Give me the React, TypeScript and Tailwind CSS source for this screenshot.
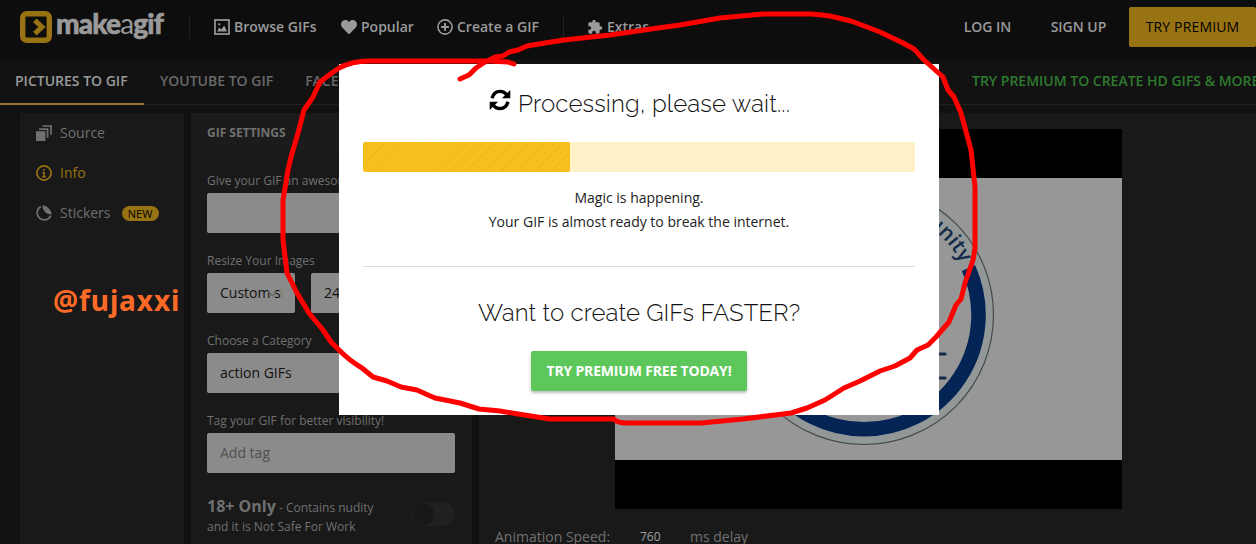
import type { ReactNode } from "react";
import { FaHeart } from "react-icons/fa";
import { MdExtension } from "react-icons/md";

function ImageIcon() {
  return (
    <svg width="16" height="16" viewBox="0 0 16 16">
      <rect x="1" y="1" width="14" height="14" fill="none" stroke="#9a9a9a" strokeWidth="1.7" />
      <path d="M3 12.5 5.3 8.5 7.2 10.4 10.2 6.5 13 12.5Z" fill="#9a9a9a" />
      <circle cx="5.2" cy="5.3" r="1.1" fill="#9a9a9a" />
    </svg>
  );
}

function PlusIcon() {
  return (
    <svg width="16" height="16" viewBox="0 0 16 16" fill="none" stroke="#9a9a9a" strokeWidth="1.6">
      <circle cx="8" cy="8" r="7.1" />
      <path d="M8 4v8M4 8h8" strokeWidth="1.9" />
    </svg>
  );
}

function SourceIcon() {
  return (
    <svg width="16" height="16" viewBox="0 0 16 16">
      <rect x="0" y="6.2" width="9.5" height="9.8" fill="#707070" />
      <path d="M3 4.2h8.6v8.6M6.4 1h8.6v8.8" fill="none" stroke="#707070" strokeWidth="1.7" />
    </svg>
  );
}

function InfoIcon() {
  return (
    <svg width="16" height="16" viewBox="0 0 16 16">
      <circle cx="8" cy="8" r="7.1" fill="none" stroke="#987313" strokeWidth="1.7" />
      <path d="M8 4v1.8M8 7v5.2M6.4 7.5H8M6.2 11.8h3.6" stroke="#987313" strokeWidth="1.5" />
    </svg>
  );
}

function StickerIcon() {
  return (
    <svg width="16" height="16" viewBox="0 0 16 16">
      <path d="M4.8 1.6A7.1 7.1 0 1 0 14.8 10.6" fill="none" stroke="#707070" strokeWidth="1.7" />
      <path d="M6.6.2C11 .8 15 4.5 15.8 9.2 11.5 10.2 6.2 6 6.6.2Z" fill="#707070" />
    </svg>
  );
}

function SyncIcon() {
  return (
    <svg width="22" height="22" viewBox="0 0 22 22">
      <path d="M3 9.2C4.2 4.9 7.1 2.4 11 2.4c2.9 0 5.2 1.2 6.8 3.5" fill="none" stroke="#000" strokeWidth="3.4" />
      <path d="M21.3 1v8.2h-8.4Z" />
      <path d="M19 12.8c-1.2 4.3-4.1 6.8-8 6.8-2.9 0-5.2-1.2-6.8-3.5" fill="none" stroke="#000" strokeWidth="3.4" />
      <path d="M.7 21v-8.2h8.4Z" />
    </svg>
  );
}

function Logo() {
  return (
    <div className="flex h-8 w-[150px] shrink-0 items-start">
      <svg className="shrink-0" width="32" height="32" viewBox="0 0 32 32">
        <rect x="2.7" y="2.7" width="26.6" height="26.6" rx="4" fill="none" stroke="#987313" strokeWidth="5.4" />
        <path d="m14.8 9.3 7.2 6.7-7.2 6.7" fill="none" stroke="#987313" strokeWidth="5" />
      </svg>
      <div className="-mt-[5px] ml-1 flex font-[Lato] text-[28px] leading-[34px] font-black tracking-[-0.85px] text-[#9a9a9a]">
        <span className="[-webkit-text-stroke:0.6px_#9a9a9a]">make</span>
        <span className="font-normal">a</span>
        <span className="[-webkit-text-stroke:0.6px_#9a9a9a]">gif</span>
      </div>
    </div>
  );
}

function NavItem({ icon, label, className }: { icon: ReactNode; label: string; className: string }) {
  return (
    <div className={`flex shrink-0 items-center gap-1 ${className}`}>
      {icon}
      <span>{label}</span>
    </div>
  );
}

function Header() {
  return (
    <header className="flex h-[59px] items-center bg-[#0d0d0d] pb-[5px] pl-5 text-sm font-semibold whitespace-nowrap text-[#9a9a9a]">
      <Logo />
      <div className="ml-[19px] h-6 w-px bg-[#202020]" />
      <NavItem icon={<ImageIcon />} label="Browse GIFs" className="ml-6 w-[127px]" />
      <NavItem icon={<FaHeart size={16} />} label="Popular" className="w-[96px]" />
      <NavItem icon={<PlusIcon />} label="Create a GIF" className="w-[126px]" />
      <div className="h-6 w-px bg-[#202020]" />
      <NavItem icon={<MdExtension size={16} />} label="Extras" className="ml-[23px]" />
      <div className="ml-auto flex w-[311px] items-center">
        <div className="w-[86px] text-center">LOG IN</div>
        <div className="ml-[7px] w-[84px] text-center">SIGN UP</div>
        <button className="ml-[9px] h-10 w-[127px] shrink-0 rounded-[2px] bg-[#987313] text-sm font-normal tracking-[0.15px] text-black">TRY PREMIUM</button>
      </div>
    </header>
  );
}

function Tabs() {
  return (
    <nav className="flex h-[46px] justify-between border-b border-[#202020] bg-[#121212] text-sm font-semibold whitespace-nowrap text-[#696969]">
      <div className="flex">
        <div className="flex h-[46px] w-[144px] items-center border-b-2 border-[#987336] pl-[15px] text-[#9a9a9a]">PICTURES TO GIF</div>
        <div className="ml-4 flex h-11 items-center">YOUTUBE TO GIF</div>
        <div className="ml-8 flex h-11 items-center">FACEBOOK TO GIF</div>
      </div>
      <div className="flex h-11 w-[284px] items-center text-[#2f7a2f]">TRY PREMIUM TO CREATE HD GIFS &amp; MORE</div>
    </nav>
  );
}

function Sidebar() {
  return (
    <aside className="w-[164px] shrink-0 bg-[#191919] pl-4 text-sm text-[#707070]">
      <div className="flex h-10 items-center gap-2"><SourceIcon />Source</div>
      <div className="flex h-10 items-center gap-2 text-[#987313]"><InfoIcon />Info</div>
      <div className="flex h-10 items-center gap-2">
        <StickerIcon />Stickers
        <span className="ml-[3px] h-[15px] w-[37px] rounded-full bg-[#987313] text-center text-[11px] leading-[15px] text-black">NEW</span>
      </div>
      <div className="mt-[48px] ml-[17px] font-[Noto_Sans] text-[28px] leading-[38px] font-bold tracking-[0.9px] text-[#ff6b27]">@fujaxxi</div>
    </aside>
  );
}

function Field({ label, children }: { label: string; children: ReactNode }) {
  return (
    <div className="h-20 whitespace-nowrap">
      <div className="h-5 text-xs leading-4 text-[#707070]">{label}</div>
      {children}
    </div>
  );
}

function Settings() {
  const input = "flex h-10 items-center rounded-[2px] bg-[#8b8b8b] px-[13px] text-sm text-[#111]";
  return (
    <section className="w-[281px] shrink-0 bg-[#191919]">
      <h2 className="h-10 bg-[#1b1b1b] pl-4 text-xs leading-10 font-bold text-[#707070]">GIF SETTINGS</h2>
      <div className="mt-5 w-[264px] pl-4">
        <Field label="Give your GIF an awesome title!">
          <div className={input} />
        </Field>
        <Field label="Resize Your Images">
          <div className="flex gap-4">
            <div className={`relative w-[88px] ${input}`}>
              <span className="w-[62px] overflow-hidden">Custom size</span>
              <svg className="absolute top-[17px] left-[60px]" width="11" height="8" viewBox="0 0 11 8">
                <path d="m1 1 4.5 5L10 1" fill="none" stroke="#666" strokeWidth="1.4" />
              </svg>
            </div>
            <div className={`w-[88px] ${input}`}>240</div>
          </div>
        </Field>
        <Field label="Choose a Category">
          <div className={input}>action GIFs</div>
        </Field>
        <Field label="Tag your GIF for better visibility!">
          <div className={input}><span className="text-[#505050]">Add tag</span></div>
        </Field>
        <div className="flex items-start justify-between pt-1">
          <p className="text-xs leading-[19px] whitespace-nowrap text-[#707070]">
            <b className="text-base leading-[19px]">18+ Only</b> - Contains nudity
            <br />
            and it is Not Safe For Work
          </p>
          <div className="mt-[5px] flex h-6 w-11 items-center rounded-full bg-[#202020]">
            <span className="ml-px h-[22px] w-[22px] rounded-full bg-[#181818]" />
          </div>
        </div>
      </div>
    </section>
  );
}

function Seal() {
  return (
    <svg width="507" height="282" viewBox="0 0 507 282">
      <rect width="507" height="282" fill="#979797" />
      <circle cx="249" cy="137" r="129.5" fill="#929797" stroke="#454a4b" strokeWidth="1.2" />
      <circle cx="249" cy="137" r="108" fill="#979797" />
      <path d="M353.5 90A114.5 114.5 0 1 1 144.5 90" fill="none" stroke="#032454" strokeWidth="14.5" />
      <path id="seal-arc" d="M139 137A110 110 0 0 1 359 137" fill="none" />
      <text fill="#142b49" fontFamily="Open Sans, sans-serif" fontSize="21" fontWeight="600">
        <textPath href="#seal-arc" startOffset="84.5%" textAnchor="end">Community</textPath>
      </text>
      <path d="M314 176h16M314 200h16" stroke="#142b49" strokeWidth="3.2" strokeLinecap="round" />
    </svg>
  );
}

function Preview() {
  return (
    <section className="min-w-0 flex-1 bg-[#191919] pt-4 pl-4">
      <div className="ml-[120px] flex h-[380px] w-[507px] items-center bg-black">
        <Seal />
      </div>
      <div className="flex h-[55px] items-center text-sm whitespace-nowrap text-[#707070]">
        <span className="w-[115px]">Animation Speed:</span>
        <span className="w-20 pl-[30px] text-xs text-[#a0a0a0]">760</span>
        <span>ms delay</span>
      </div>
    </section>
  );
}

function Modal() {
  return (
    <div className="absolute top-16 left-[339px] flex h-[351px] w-[600px] flex-col items-center bg-white px-6 text-[#222]">
      <h1 className="mt-[21px] ml-0.5 flex h-9 items-center font-[Raleway,Lato] text-2xl font-light whitespace-nowrap text-[#111]">
        <span className="mr-[7px] mb-[7px]"><SyncIcon /></span>
        <svg width="273" height="36" viewBox="0 0 273 36">
          <text x="0" y="27" fill="#111" textLength="272">Processing, please wait...</text>
        </svg>
      </h1>
      <div className="mt-[21px] h-[30px] w-full overflow-hidden rounded-[2px] bg-[#fff0c8]">
        <div className="h-full w-[207px] rounded-[2px] bg-[repeating-linear-gradient(135deg,#f6bf1e_0_4px,#efb91b_4px_5px,#f7c328_5px_6px)]" />
      </div>
      <p className="mt-[14px] text-center text-sm leading-6">
        Magic is happening.
        <br />
        Your GIF is almost ready to break the internet.
      </p>
      <hr className="mt-8 w-full border-[#ddd]" />
      <h2 className="mt-[27px] h-9 font-[Raleway,Lato] text-2xl font-light">
        <svg width="323" height="36" viewBox="0 0 323 36">
          <text x="0" y="27" fill="#111" textLength="322">Want to create GIFs FASTER?</text>
        </svg>
      </h2>
      <button className="mt-[21px] h-10 w-[216px] rounded-[2px] bg-[#5ec75c] text-sm font-bold tracking-[-0.18px] whitespace-nowrap text-white shadow-[0_2px_3px_rgba(0,0,0,0.25)]">
        TRY PREMIUM FREE TODAY!
      </button>
    </div>
  );
}

function Scribble() {
  return (
    <svg className="pointer-events-none absolute inset-0" width="1256" height="544" viewBox="0 0 1256 544">
      <path
        d="M514 64 508 62 490 61H369Q352 61 339 68L329 75 320 82 313 97 304 110 298 133 291 157 288 170 283 200V240L287 273 297 293 309 313 323 330 331 342 339 350Q350 361 362 368L373 377 387 381 401 387 417 390 428 395 435 398 460 403 479 409 500 411 518 414 550 419H614Q617 423 627 423H701L743 419 791 413 807 408 825 400 844 388 860 381 880 371 895 366 910 358 917 350 928 345 936 337 949 322 956 305 961 299 965 283 973 260 975 248V187L971 150 961 113 954 97 948 90 943 77 924 60 914 49 903 43 880 32 867 27 851 21 830 16 812 14H763L720 18 680 25 651 29 610 35 564 40 545 43 527 46 518 50 509 52 503 56 495 57 485 62 476 68 469 75 460 79"
        fill="none"
        stroke="#ff0000"
        strokeWidth="5"
        strokeLinecap="round"
        strokeLinejoin="round"
      />
    </svg>
  );
}

export default function App() {
  return (
    <div className="relative flex h-[544px] w-[1256px] flex-col overflow-hidden bg-[#111] font-[Open_Sans,sans-serif]">
      <Header />
      <Tabs />
      <main className="flex min-h-0 flex-1 gap-[7px] pt-2 pl-5">
        <Sidebar />
        <Settings />
        <Preview />
      </main>
      <Modal />
      <Scribble />
    </div>
  );
}
